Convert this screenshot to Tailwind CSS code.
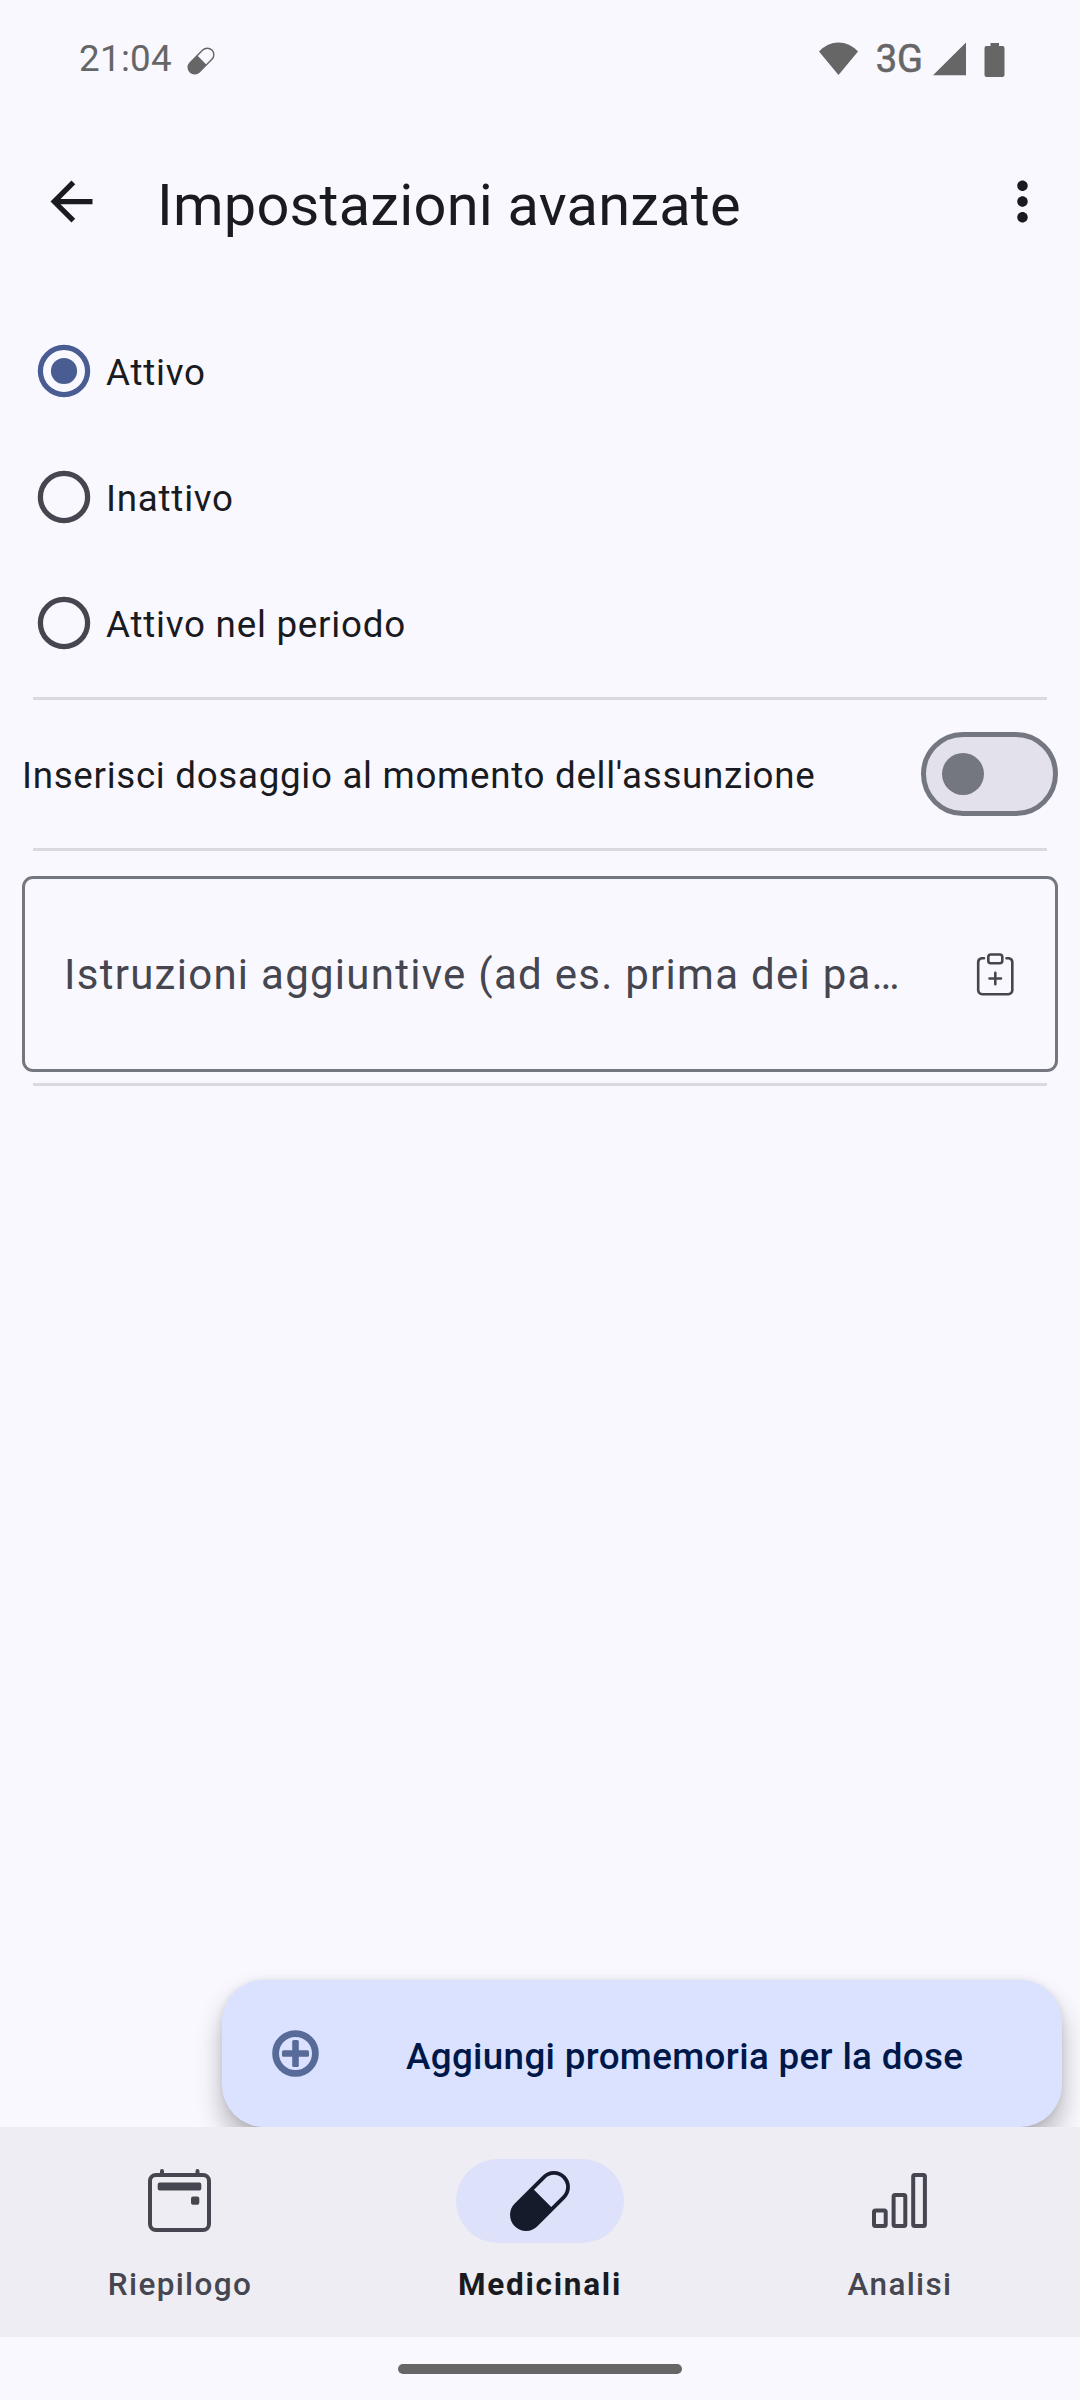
<!DOCTYPE html>
<html lang="it">
<head>
<meta charset="utf-8">
<title>Impostazioni avanzate</title>
<script src="https://cdn.jsdelivr.net/npm/@tailwindcss/browser@4"></script>
</head>
<body class="bg-[#f9f8ff]">
<div class="w-[1080px] h-[2400px] flex flex-col overflow-hidden font-[Roboto,sans-serif] text-[#1a1b21] whitespace-nowrap">

  <!-- Status bar -->
  <div class="h-[118px] shrink-0 flex items-center justify-between pl-[79px] pr-[75px] text-[#666666]">
    <div class="flex items-center">
      <span class="text-[36.75px] leading-[44px] tracking-[0.3px]">21:04</span>
      <svg class="ml-[15px] mt-[3px]" width="28" height="28" viewBox="-31 -31 62 62" fill="currentColor"><path transform="rotate(-45)" fill-rule="evenodd" d="M-19.700 -16H19.700A16 16 0 0 1 19.700 16H-19.700A16 16 0 0 1 -19.700 -16ZM3 -12.800V12.800H19.700A12.800 12.800 0 0 0 19.700 -12.800Z"/></svg>
    </div>
    <div class="flex items-center">
      <svg width="39" height="34" viewBox="0 0 39 34" fill="currentColor"><path d="M19.500 33 0 9.500Q8.500 0.500 19.500 0.500T39 9.500Z"/></svg>
      <span class="ml-[18px] text-[38px] leading-[44px] [-webkit-text-stroke:0.6px_#666666]">3G</span>
      <svg class="ml-[10px]" width="33" height="34" viewBox="0 0 33 34" fill="currentColor"><path d="M0 33.200 33 0.500V33.200Z"/></svg>
      <svg class="ml-[18px] mt-px" width="21" height="34" viewBox="0 0 21 34" fill="currentColor"><path d="M6.500 0H15V3H18.500A2 2 0 0 1 20.500 5V32A2 2 0 0 1 18.500 34H2.500A2 2 0 0 1 .5 32V5A2 2 0 0 1 2.500 3H6.500Z"/></svg>
    </div>
  </div>

  <!-- Toolbar -->
  <header class="h-[166px] shrink-0 flex items-center pl-[40px] pr-[26px]">
    <svg width="63" height="63" viewBox="0 0 24 24" fill="currentColor"><path d="M20 11H7.830l5.590-5.590L12 4l-8 8 8 8 1.410-1.410L7.830 13H20v-2z"/></svg>
    <h1 class="ml-[54px] pt-[7px] text-[57.75px] leading-[68px] tracking-[0.22px]">Impostazioni avanzate</h1>
    <svg class="ml-auto" width="63" height="63" viewBox="0 0 24 24" fill="currentColor"><path d="M12 8c1.100 0 2-.9 2-2s-.9-2-2-2-2 .9-2 2 .9 2 2 2zm0 2c-1.100 0-2 .9-2 2s.9 2 2 2 2-.9 2-2-.9-2-2-2zm0 6c-1.100 0-2 .9-2 2s.9 2 2 2 2-.9 2-2-.9-2-2-2z"/></svg>
  </header>

  <!-- Settings -->
  <main class="flex-1 min-h-0 overflow-hidden flex flex-col pt-[24px] text-[36.75px] leading-[44px] tracking-[0.76px]">
    <label class="h-[126px] shrink-0 flex items-center pl-[37px]">
      <svg width="54" height="54" viewBox="0 0 54 54"><circle cx="27" cy="27" r="23.600" fill="none" stroke="#495d92" stroke-width="5.250"/><circle cx="27" cy="27" r="13.100" fill="#495d92"/></svg>
      <span class="ml-[15px] pt-[3px]">Attivo</span>
    </label>
    <label class="h-[126px] shrink-0 flex items-center pl-[37px]">
      <svg width="54" height="54" viewBox="0 0 54 54"><circle cx="27" cy="27" r="23.600" fill="none" stroke="#45464f" stroke-width="5.250"/></svg>
      <span class="ml-[15px] pt-[3px]">Inattivo</span>
    </label>
    <label class="h-[126px] shrink-0 flex items-center pl-[37px]">
      <svg width="54" height="54" viewBox="0 0 54 54"><circle cx="27" cy="27" r="23.600" fill="none" stroke="#45464f" stroke-width="5.250"/></svg>
      <span class="ml-[15px] pt-[3px]">Attivo nel periodo</span>
    </label>
    <div class="mt-[11px] mx-[33px] h-[3px] shrink-0 bg-[#dad9e0]"></div>

    <div class="h-[148px] shrink-0 flex items-center justify-between pl-[22px] pr-[22px]">
      <span class="pt-[3px] tracking-[0.69px]">Inserisci dosaggio al momento dell'assunzione</span>
      <div class="w-[137px] h-[84px] rounded-full border-5 border-[#757780] bg-[#e3e1e9] flex items-center pl-[16px]">
        <div class="size-[42px] rounded-full bg-[#757780]"></div>
      </div>
    </div>
    <div class="mx-[33px] h-[3px] shrink-0 bg-[#dad9e0]"></div>

    <div class="mt-[25px] mx-[22px] h-[196px] shrink-0 rounded-[11px] border-3 border-[#757780] flex items-center justify-between pl-[39px] pr-[28px] text-[#45464f]">
      <span class="pt-[2px] text-[42px] leading-[50px] tracking-[1.27px]">Istruzioni aggiuntive (ad es. prima dei pa…</span>
      <svg width="63" height="63" viewBox="0 0 63 63" fill="none" stroke="currentColor" stroke-width="2.600" stroke-linecap="round"><path d="M20 15.300H17.500A4 4 0 0 0 14.200 19.300V47.500A4 4 0 0 0 18.200 51.200H44.300A4 4 0 0 0 48.300 47.500V19.300A4 4 0 0 0 45 15.300H42.500M31.300 29.700V41.300M25.500 35.500H37"/><rect x="24.300" y="11.500" width="14" height="8.800" rx="2.500"/></svg>
    </div>
    <div class="mt-[11px] mx-[33px] h-[3px] shrink-0 bg-[#dad9e0]"></div>

    <button class="mt-auto ml-[222px] w-[840px] h-[147px] shrink-0 rounded-[42px] bg-[#dae2ff] shadow-[0_16px_26px_rgba(0,0,0,0.28),0_0_7px_rgba(0,0,0,0.08)] flex items-center pl-[49px] text-[#001849] font-medium tracking-[0.35px]">
      <svg width="49" height="49" viewBox="0 0 49 49" fill="#586b98"><circle cx="24.500" cy="24.500" r="19.900" fill="none" stroke="#586b98" stroke-width="6.800"/><rect x="21.200" y="11" width="6.600" height="27" rx="1.500"/><rect x="11" y="21.200" width="27" height="6.600" rx="1.500"/></svg>
      <span class="ml-[86px] pt-[6px]">Aggiungi promemoria per la dose</span>
    </button>
  </main>

  <!-- Bottom navigation -->
  <nav class="h-[210px] shrink-0 relative z-10 grid grid-cols-3 bg-[#eeedf3] text-[31.5px] leading-[38px] tracking-[1.36px] font-medium text-[#45464f]">
    <div class="flex flex-col items-center pt-[32px]">
      <div class="w-[168px] h-[84px] flex items-center justify-center">
        <svg width="84" height="84" viewBox="0 0 84 84" fill="currentColor"><rect x="12" y="16" width="59" height="55" rx="6" fill="none" stroke="currentColor" stroke-width="4"/><path d="M22 16V12a2 2 0 0 1 4 0V16ZM57.500 16V12a2 2 0 0 1 4 0V16Z"/><rect x="19.700" y="23.500" width="43.600" height="8" rx="2"/><rect x="53" y="37.500" width="8.300" height="8.300" rx="2"/></svg>
      </div>
      <span class="mt-[23px]">Riepilogo</span>
    </div>
    <div class="flex flex-col items-center pt-[32px]">
      <div class="w-[168px] h-[84px] rounded-full bg-[#dde1f9] flex items-center justify-center">
        <svg width="84" height="84" viewBox="-42 -42 84 84" fill="#161b2c"><path transform="rotate(-45)" fill-rule="evenodd" d="M-19.700 -16H19.700A16 16 0 0 1 19.700 16H-19.700A16 16 0 0 1 -19.700 -16ZM3.700 -12.200V12.200H19.700A12.200 12.200 0 0 0 19.700 -12.200Z"/></svg>
      </div>
      <span class="mt-[23px] font-bold tracking-[1.75px] text-[#1a1b21]">Medicinali</span>
    </div>
    <div class="flex flex-col items-center pt-[32px]">
      <div class="w-[168px] h-[84px] flex items-center justify-center">
        <svg width="84" height="84" viewBox="0 0 84 84" fill="none" stroke="currentColor" stroke-width="4"><rect x="16" y="51.500" width="11.700" height="15.500" rx="1.500"/><rect x="35.600" y="36" width="11.700" height="31" rx="1.500"/><rect x="55.200" y="16" width="11.700" height="51" rx="1.500"/></svg>
      </div>
      <span class="mt-[23px]">Analisi</span>
    </div>
  </nav>

  <!-- Gesture handle -->
  <div class="h-[63px] shrink-0 flex justify-center pt-[27px]">
    <div class="w-[284px] h-[10px] rounded-full bg-[#666666]"></div>
  </div>
</div>
</body>
</html>
